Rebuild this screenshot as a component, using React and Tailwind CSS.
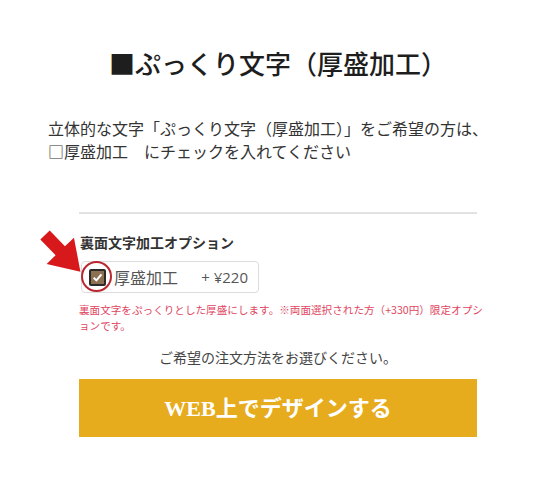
import { useState } from 'react';

const jp = { fontFamily: '"Noto Sans CJK JP", "Noto Sans", sans-serif' };

function RedArrow() {
  return (
    <svg className="absolute left-[34px] top-[227px]" width="52" height="52" viewBox="0 0 52 52">
      <g transform="translate(11,8) rotate(46)">
        <polygon points="0,-6.5 22,-6.5 22,-19 51,0 22,19 22,6.5 0,6.5" fill="#d7191c" />
      </g>
    </svg>
  );
}

export default function App() {
  const [checked, setChecked] = useState(true);

  return (
    <div className="relative w-[556px] h-[480px] bg-white text-[#333]" style={jp}>
      <h1 className="pt-[43px] text-center text-[26px] leading-[39px] font-medium text-[#1e1e1e]">
        ■ぷっくり文字（厚盛加工）
      </h1>

      <p className="mt-[35px] px-[48px] text-[16px] leading-[23px] text-[#333]">
        立体的な文字「ぷっくり文字（厚盛加工）」をご希望の方は、
        <br />
        □厚盛加工　にチェックを入れてください
      </p>

      <div className="mx-auto mt-[49px] w-[398px]">
        <div className="h-[2px] bg-[#e2e2e2]" />

        <div className="mt-[19px] text-[14px] leading-[18px] font-bold text-[#333] pl-[1px]">
          裏面文字加工オプション
        </div>

        <label className="mt-[10px] flex h-[32px] w-[178px] items-center rounded-[4px] border border-[#dcdcdc] pl-[7px] pr-[10px] ml-[2px]">
          <span
            onClick={() => setChecked(!checked)}
            className="flex h-[17px] w-[17px] items-center justify-center rounded-[2px] border-2 border-[#2a2a2a] bg-[#8c7150]"
          >
            {checked && (
              <svg width="11" height="11" viewBox="0 0 10 10">
                <path d="M1.5 5.2 L4 7.6 L8.6 2.2" fill="none" stroke="#fff" strokeWidth="1.8" />
              </svg>
            )}
          </span>
          <span className="ml-[8px] text-[16px] text-[#555]">厚盛加工</span>
          <span className="ml-auto text-[15px] text-[#555]" style={{ fontFamily: '"Open Sans", "Noto Sans", sans-serif' }}>
            + ¥220
          </span>
        </label>

        <p className="mt-[9px] w-[408px] text-[10.6px] leading-[16px] text-[#e0455f]">
          裏面文字をぷっくりとした厚盛にします。※両面選択された方（+330円）限定オプションです。
        </p>

        <p className="mt-[13px] text-center text-[14px] leading-[20px] text-[#444]">
          ご希望の注文方法をお選びください。
        </p>

        <button className="mt-[12px] flex h-[58px] w-full items-center justify-center bg-[#e6ac1e] text-[22px] font-bold text-white"
          style={{ fontFamily: '"Liberation Serif", "Noto Sans CJK JP", serif' }}>
          WEB上でデザインする
        </button>
      </div>

      <RedArrow />
      <div className="absolute left-[81px] top-[261px] h-[31px] w-[31px] rounded-full border-2 border-[#b8262e]" />
    </div>
  );
}
